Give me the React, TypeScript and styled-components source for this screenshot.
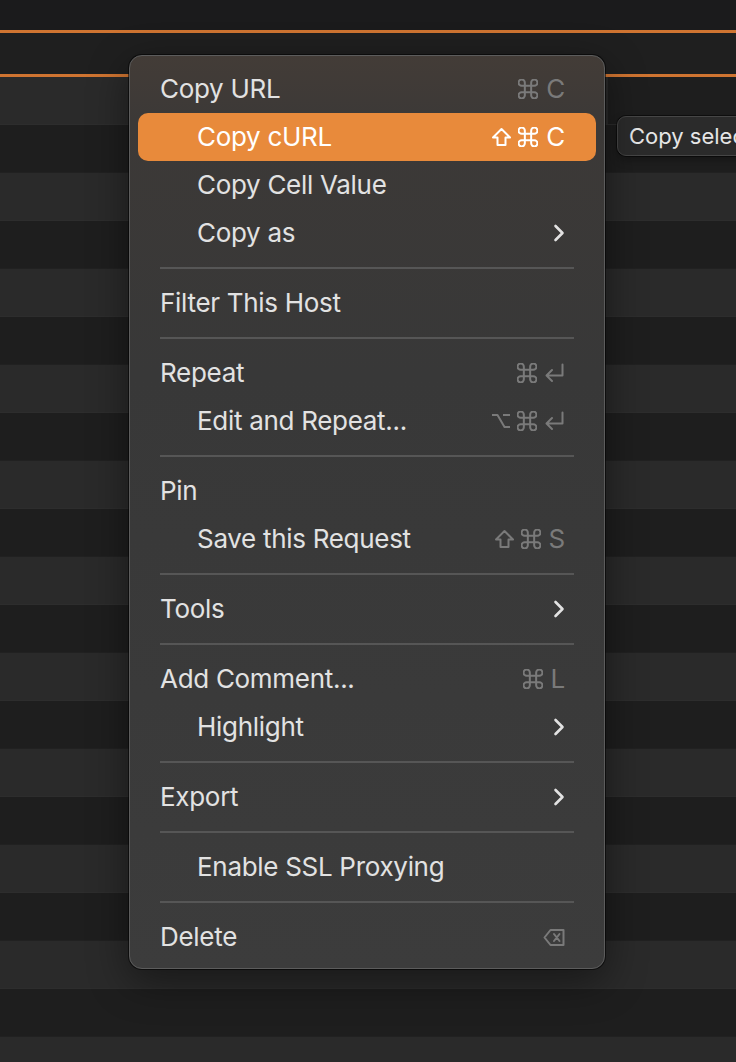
import React from "react";
import styled, { createGlobalStyle } from "styled-components";

const Global = createGlobalStyle`
  html, body { margin: 0; padding: 0; background: #1c1c1c; overflow: hidden; }
  body { font-family: Inter, "Noto Sans", "Liberation Sans", sans-serif; -webkit-font-smoothing: antialiased; }
  * { box-sizing: border-box; }
`;

const Page = styled.div`
  position: relative;
  width: 736px;
  height: 1062px;
  overflow: hidden;
  background: #1c1c1c;
  display: flex;
  flex-direction: column;
`;

const HeaderBand = styled.div`
  height: 30px;
  flex: none;
  background: #1b1b1c;
`;

const AccentLine = styled.div`
  height: 3px;
  flex: none;
  background: #cf7431;
`;

const ClickedRow = styled.div`
  height: 41px;
  flex: none;
  background: #1f1f1f;
`;

const TableRow = styled.div<{ $light: boolean; $split?: boolean }>`
  height: 48px;
  flex: none;
  background: ${(p) =>
    p.$split
      ? "linear-gradient(to right, #2a2a2a 0, #2a2a2a 608px, #1e1e1e 608px)"
      : p.$light
      ? "#2a2a2a"
      : "#1e1e1e"};
  border-bottom: 1px solid ${(p) => (p.$light ? "#2d2d2d" : "#212121")};
`;

const Menu = styled.div`
  position: absolute;
  left: 129px;
  top: 55px;
  width: 476px;
  padding: 9px 8px 7px;
  border-radius: 13px;
  border: 1px solid #5c5c5c;
  background: linear-gradient(180deg, #433c37 0%, #3c3937 7%, #383838 35%, #3a3a3a 70%, #3c3c3c 100%);
  box-shadow: 0 0 0 1px rgba(0, 0, 0, 0.55), 0 12px 40px rgba(0, 0, 0, 0.45);
  display: flex;
  flex-direction: column;
`;

const Item = styled.div<{ $indent?: boolean; $active?: boolean }>`
  height: 48px;
  display: flex;
  align-items: center;
  justify-content: space-between;
  padding: 0 31px 0 ${(p) => (p.$indent ? 59 : 22)}px;
  border-radius: 10px;
  background: ${(p) => (p.$active ? "#e88a3b" : "transparent")};
  color: ${(p) => (p.$active ? "#ffffff" : "#e2e2e2")};
  font-size: 26px;
  letter-spacing: -0.3px;
  white-space: nowrap;
`;

const Label = styled.span`
  line-height: 1;
`;

const Separator = styled.div`
  height: 22px;
  padding: 0 22px;
  display: flex;
  align-items: center;
  &::after {
    content: "";
    flex: 1;
    height: 2px;
    background: #565656;
  }
`;

const Shortcut = styled.span<{ $active?: boolean }>`
  display: flex;
  align-items: center;
  gap: 6px;
  color: ${(p) => (p.$active ? "#ffffff" : "#7a7a7a")};
  svg { display: block; flex: none; }
`;

const KeyLetter = styled.span`
  font-size: 26px;
  line-height: 1;
  margin-left: 2px;
`;

const Chevron = styled.svg`
  color: #e2e2e2;
  display: block;
`;

const Tooltip = styled.div`
  position: absolute;
  left: 617px;
  top: 116px;
  height: 40px;
  padding: 0 11px;
  display: flex;
  align-items: center;
  border-radius: 9px;
  background: #2b2b2b;
  border: 1px solid #464646;
  box-shadow: 0 0 0 1px rgba(0, 0, 0, 0.5), 0 4px 10px rgba(0, 0, 0, 0.3);
  color: #e6e6e6;
  font-size: 22px;
  white-space: nowrap;
`;

type Glyph = "cmd" | "shift" | "opt" | "ret" | "del";

const stroke = {
  fill: "none",
  stroke: "currentColor",
  strokeLinejoin: "round" as const,
  strokeLinecap: "round" as const,
};

function KeyGlyph({ g }: { g: Glyph }) {
  switch (g) {
    case "cmd":
      return (
        <svg width="20" height="20" viewBox="2.5 2.5 19 19">
          <path
            {...stroke}
            strokeWidth={1.9}
            d="M15 6v12a3 3 0 1 0 3-3H6a3 3 0 1 0 3 3V6a3 3 0 1 0-3 3h12a3 3 0 1 0-3-3"
          />
        </svg>
      );
    case "shift":
      return (
        <svg width="21" height="20" viewBox="0 0 21 20">
          <path {...stroke} strokeWidth={2} d="M10.5 2 L19 10.5 H14.5 V18 H6.5 V10.5 H2 Z" />
        </svg>
      );
    case "opt":
      return (
        <svg width="20" height="20" viewBox="0 0 20 20">
          <path {...stroke} strokeLinecap="butt" strokeWidth={2} d="M1 4 H6.5 L13.5 16 H19 M12 4 H19" />
        </svg>
      );
    case "ret":
      return (
        <svg width="22" height="20" viewBox="0 0 22 20">
          <path {...stroke} strokeWidth={2} d="M19.5 1.5 V12.5 H3.5 M9 7 L3.5 12.5 L9 18" />
        </svg>
      );
    case "del":
      return (
        <svg width="22" height="19" viewBox="0 0 22 19">
          <path
            {...stroke}
            strokeWidth={2}
            d="M7.5 2 H20.5 V17 H7.5 L1.5 9.5 Z M11 6 L16.5 13 M16.5 6 L11 13"
          />
        </svg>
      );
  }
}

function Arrow() {
  return (
    <Chevron width="12" height="20" viewBox="0 0 12 20">
      <path {...stroke} strokeWidth={2.6} d="M2.5 3 L9.5 10 L2.5 17" />
    </Chevron>
  );
}

type Entry =
  | { sep: true }
  | {
      sep?: false;
      label: string;
      indent?: boolean;
      active?: boolean;
      glyphs?: Glyph[];
      letter?: string;
      submenu?: boolean;
    };

const entries: Entry[] = [
  { label: "Copy URL", glyphs: ["cmd"], letter: "C" },
  { label: "Copy cURL", indent: true, active: true, glyphs: ["shift", "cmd"], letter: "C" },
  { label: "Copy Cell Value", indent: true },
  { label: "Copy as", indent: true, submenu: true },
  { sep: true },
  { label: "Filter This Host" },
  { sep: true },
  { label: "Repeat", glyphs: ["cmd", "ret"] },
  { label: "Edit and Repeat...", indent: true, glyphs: ["opt", "cmd", "ret"] },
  { sep: true },
  { label: "Pin" },
  { label: "Save this Request", indent: true, glyphs: ["shift", "cmd"], letter: "S" },
  { sep: true },
  { label: "Tools", submenu: true },
  { sep: true },
  { label: "Add Comment...", glyphs: ["cmd"], letter: "L" },
  { label: "Highlight", indent: true, submenu: true },
  { sep: true },
  { label: "Export", submenu: true },
  { sep: true },
  { label: "Enable SSL Proxying", indent: true },
  { sep: true },
  { label: "Delete", glyphs: ["del"] },
];

export default function App() {
  const rows = Array.from({ length: 21 }, (_, i) => i);
  return (
    <>
      <Global />
      <Page>
        <HeaderBand />
        <AccentLine />
        <ClickedRow />
        <AccentLine />
        {rows.map((i) => (
          <TableRow key={i} $light={i % 2 === 0} $split={i === 0} />
        ))}

        <Tooltip>Copy selected</Tooltip>

        <Menu>
          {entries.map((e, idx) =>
            e.sep ? (
              <Separator key={idx} />
            ) : (
              <Item key={idx} $indent={e.indent} $active={e.active}>
                <Label>{e.label}</Label>
                {e.submenu ? (
                  <Arrow />
                ) : e.glyphs || e.letter ? (
                  <Shortcut $active={e.active}>
                    {(e.glyphs || []).map((g, j) => (
                      <KeyGlyph key={j} g={g} />
                    ))}
                    {e.letter && <KeyLetter>{e.letter}</KeyLetter>}
                  </Shortcut>
                ) : null}
              </Item>
            )
          )}
        </Menu>
      </Page>
    </>
  );
}
